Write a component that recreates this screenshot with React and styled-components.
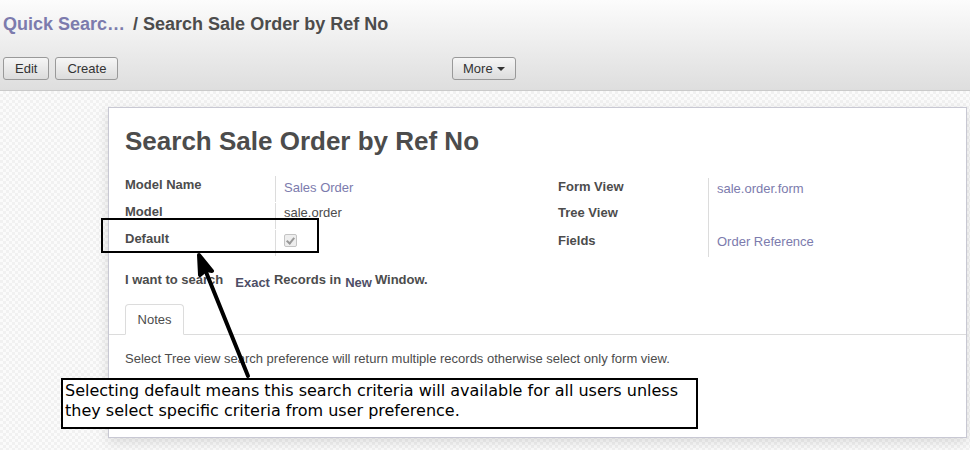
import React from 'react';
import styled, { createGlobalStyle } from 'styled-components';

const GlobalStyle = createGlobalStyle`
  html, body {
    margin: 0;
    padding: 0;
    background: #fff;
  }
  body {
    font-family: "Liberation Sans", Arial, sans-serif;
    color: #4c4c4c;
    width: 970px;
    height: 450px;
    overflow: hidden;
  }
`;

const Page = styled.div`
  position: relative;
  width: 970px;
  height: 450px;
  overflow: hidden;
`;

const ControlPanel = styled.div`
  height: 91px;
  box-sizing: border-box;
  padding: 12px 3px 0;
  background: linear-gradient(to bottom, #fcfcfc, #dedede);
  border-bottom: 1px solid #cacaca;
`;

const Breadcrumb = styled.div`
  display: flex;
  gap: 8px;
  font-size: 18px;
  font-weight: bold;
  line-height: 24px;
  height: 24px;
`;

const Crumb = styled.span`
  color: #7c7bad;
`;

const Current = styled.span`
  color: #4c4c4c;
`;

const ButtonBar = styled.div`
  display: grid;
  grid-template-columns: 449px auto;
  margin-top: 21px;
`;

const ButtonGroup = styled.div`
  display: flex;
  gap: 6px;
`;

const Button = styled.button`
  height: 23px;
  padding: 0 ${({ $pad }) => $pad || 10}px;
  font-family: "Liberation Sans", Arial, sans-serif;
  font-size: 13px;
  color: #333;
  border: 1px solid #999;
  border-radius: 3px;
  background: linear-gradient(to bottom, #f6f6f6, #dcdcdc);
  display: flex;
  align-items: center;
  gap: 4px;
`;

const Caret = styled.span`
  width: 0;
  height: 0;
  border-left: 4px solid transparent;
  border-right: 4px solid transparent;
  border-top: 4px solid #333;
`;

const Content = styled.div`
  height: 359px;
  box-sizing: border-box;
  padding: 16px 0 0 108px;
  background: repeating-conic-gradient(#f1f1f1 0 25%, #fbfbfb 0 50%) 0 0 / 6px 6px;
`;

const Sheet = styled.div`
  width: 859px;
  height: 331px;
  box-sizing: border-box;
  background: #fff;
  border: 1px solid #c8c8d3;
  box-shadow: 0 4px 12px rgba(0, 0, 0, 0.12);
  padding: 16px 0 0;
`;

const Title = styled.h1`
  margin: 0 0 0 16px;
  font-size: 26px;
  line-height: 34px;
  font-weight: bold;
  color: #4c4c4c;
`;

const Groups = styled.div`
  display: grid;
  grid-template-columns: 433px 410px;
  margin: 18px 0 0 16px;
`;

const FieldTable = styled.div`
  display: grid;
  grid-template-columns: ${({ $label }) => $label}px 1fr;
  padding-top: ${({ $top }) => $top || 0}px;
`;

const Label = styled.div`
  font-size: 13px;
  font-weight: bold;
  color: #4c4c4c;
  height: ${({ $h }) => $h || 26}px;
  line-height: 18px;
  padding-top: ${({ $pt }) => $pt || 0}px;
  box-sizing: border-box;
`;

const Value = styled.div`
  font-size: 13px;
  color: ${({ $link }) => ($link ? '#7c7bad' : '#4c4c4c')};
  border-left: 1px solid #dcdcdc;
  padding-left: 8px;
  height: ${({ $h }) => $h || 26}px;
  line-height: 18px;
  padding-top: ${({ $pt }) => $pt || 2}px;
  box-sizing: border-box;
`;

const Check = styled.span`
  display: inline-block;
  width: 11px;
  height: 11px;
  margin-top: 2px;
  border: 1px solid #c4c4c4;
  border-radius: 2px;
  background: #eee;
  position: relative;
  &::after {
    content: '';
    position: absolute;
    left: 3px;
    top: 1px;
    width: 3px;
    height: 6px;
    border: solid #999;
    border-width: 0 2px 2px 0;
    transform: rotate(40deg);
  }
`;

const Sentence = styled.div`
  display: flex;
  align-items: flex-start;
  margin: 15px 0 0 16px;
  font-size: 13px;
  font-weight: bold;
  color: #4c4c4c;
  height: 20px;
`;

const Word = styled.span`
  margin-right: ${({ $mr }) => $mr}px;
  padding-top: ${({ $low }) => ($low ? 3 : 0)}px;
  color: ${({ $low }) => ($low ? '#4e4e66' : '#4c4c4c')};
`;

const TabStrip = styled.div`
  display: flex;
  margin-top: 12px;
  padding-left: 16px;
  border-bottom: 1px solid #dcdcdc;
  height: 30px;
`;

const Tab = styled.div`
  width: 59px;
  height: 31px;
  box-sizing: border-box;
  border: 1px solid #dcdcdc;
  border-bottom-color: #fff;
  border-radius: 4px 4px 0 0;
  background: #fff;
  font-size: 13px;
  color: #4c4c4c;
  text-align: center;
  line-height: 30px;
`;

const Notes = styled.p`
  margin: 16px 0 0 16px;
  font-size: 13px;
  color: #4c4c4c;
`;

const Callout = styled.div`
  position: absolute;
  left: 61px;
  top: 378px;
  width: 637px;
  height: 51px;
  box-sizing: border-box;
  border: 2px solid #000;
  background: #fff;
  padding: 1px 2px;
  font-family: "DejaVu Sans", sans-serif;
  font-size: 16px;
  line-height: 20px;
  color: #000;
`;

const Highlight = styled.div`
  position: absolute;
  left: 101px;
  top: 218px;
  width: 218px;
  height: 35px;
  box-sizing: border-box;
  border: 2px solid #000;
`;

const Arrow = styled.svg`
  position: absolute;
  left: 180px;
  top: 245px;
`;

export default function App() {
  return (
    <Page>
      <GlobalStyle />
      <ControlPanel>
        <Breadcrumb>
          <Crumb>Quick Searc…</Crumb>
          <Current>/ Search Sale Order by Ref No</Current>
        </Breadcrumb>
        <ButtonBar>
          <ButtonGroup>
            <Button $pad={11}>Edit</Button>
            <Button $pad={11}>Create</Button>
          </ButtonGroup>
          <ButtonGroup>
            <Button $pad={10}>More<Caret /></Button>
          </ButtonGroup>
        </ButtonBar>
      </ControlPanel>
      <Content>
        <Sheet>
          <Title>Search Sale Order by Ref No</Title>
          <Groups>
            <FieldTable $label={150}>
              <Label $pt={0}>Model Name</Label>
              <Value $link $pt={3}>Sales Order</Value>
              <Label>Model</Label>
              <Value $pt={1}>sale.order</Value>
              <Label>Default</Label>
              <Value $pt={0}><Check /></Value>
            </FieldTable>
            <FieldTable $label={150} $top={2}>
              <Label>Form View</Label>
              <Value $link $pt={2}>sale.order.form</Value>
              <Label>Tree View</Label>
              <Value />
              <Label $pt={2} $h={27}>Fields</Label>
              <Value $link $pt={3} $h={27}>Order Reference</Value>
            </FieldTable>
          </Groups>
          <Sentence>
            <Word $mr={12}>I want to search</Word>
            <Word $mr={4} $low>Exact</Word>
            <Word $mr={4}>Records in</Word>
            <Word $mr={3} $low>New</Word>
            <Word $mr={0}>Window.</Word>
          </Sentence>
          <TabStrip>
            <Tab>Notes</Tab>
          </TabStrip>
          <Notes>
            Select Tree view search preference will return multiple records otherwise select only form view.
          </Notes>
        </Sheet>
      </Content>
      <Highlight />
      <Arrow width="80" height="140" viewBox="0 0 80 140">
        <line x1="68" y1="131" x2="24" y2="22" stroke="#000" strokeWidth="4" strokeLinecap="round" />
        <path d="M19 10 L32 26 L26 25 L20 30 Z" fill="#000" stroke="#000" strokeWidth="4" strokeLinejoin="round" />
      </Arrow>
      <Callout>
        Selecting default means this search criteria will available for all users unless they select specific criteria from user preference.
      </Callout>
    </Page>
  );
}
